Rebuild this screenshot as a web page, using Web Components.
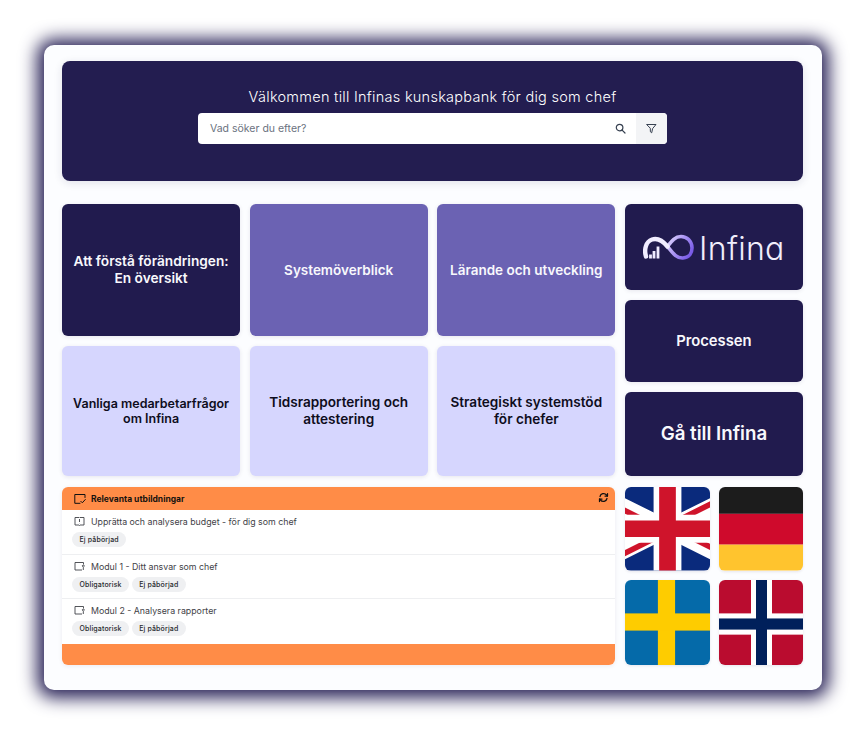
<!DOCTYPE html>
<html lang="sv">
<head>
<meta charset="utf-8">
<title>Infina</title>
<style>
  html, body { margin: 0; background: #fff; }
  body {
    box-sizing: border-box;
    min-height: 735px;
    padding: 45px 0 45px 44px;
    font-family: Inter, "Noto Sans", sans-serif;
  }
</style>
</head>
<body>
<app-panel>
  <hero-search slot="hero" heading="Välkommen till Infinas kunskapbank för dig som chef" placeholder="Vad söker du efter?"></hero-search>

  <link-tile tone="dark" size="13.7">Att förstå förändringen:<br>En översikt</link-tile>
  <link-tile tone="mid" size="13.5">Systemöverblick</link-tile>
  <link-tile tone="mid" size="13.5">Lärande och utveckling</link-tile>
  <side-stack>
    <link-tile tone="dark" style="height:86px"><infina-logo></infina-logo></link-tile>
    <link-tile tone="dark" size="14.8" style="height:82px">Processen</link-tile>
    <link-tile tone="dark" size="18.7" style="height:84px">Gå till Infina</link-tile>
  </side-stack>
  <link-tile tone="light" size="12.5">Vanliga medarbetarfrågor<br>om Infina</link-tile>
  <link-tile tone="light" size="13.6">Tidsrapportering och<br>attestering</link-tile>
  <link-tile tone="light" size="13.6">Strategiskt systemstöd<br>för chefer</link-tile>

  <edu-list heading="Relevanta utbildningar">
    <edu-item icon="book" name="Upprätta och analysera budget - för dig som chef">
      <status-chip>Ej påbörjad</status-chip>
    </edu-item>
    <edu-item icon="module" name="Modul 1 - Ditt ansvar som chef">
      <status-chip>Obligatorisk</status-chip>
      <status-chip>Ej påbörjad</status-chip>
    </edu-item>
    <edu-item icon="module" name="Modul 2 - Analysera rapporter">
      <status-chip>Obligatorisk</status-chip>
      <status-chip>Ej påbörjad</status-chip>
    </edu-item>
  </edu-list>

  <flag-grid>
    <flag-tile country="gb"></flag-tile>
    <flag-tile country="de"></flag-tile>
    <flag-tile country="se"></flag-tile>
    <flag-tile country="no"></flag-tile>
  </flag-grid>
</app-panel>

<script>
class AppPanel extends HTMLElement {
    constructor() {
        super();
        this.attachShadow({ mode: 'open' });
        this.shadowRoot.innerHTML = `
        <style>
            :host {
                display: block;
                box-sizing: border-box;
                width: 778px;
                height: 645px;
                padding: 16px 19px 0 18px;
                background: #fcfdff;
                border-radius: 10px;
                box-shadow: 0 1px 17px 7px #2a2458;
            }
            .grid {
                display: grid;
                grid-template-columns: repeat(4, 1fr);
                grid-template-rows: 132px 130px 179px;
                column-gap: 9.4px;
                row-gap: 10px;
                margin-top: 23px;
            }
        </style>
        <slot name="hero"></slot>
        <div class="grid"><slot></slot></div>
        `;
    }
}

class HeroSearch extends HTMLElement {
    constructor() {
        super();
        this.attachShadow({ mode: 'open' });
    }

    connectedCallback() {
        this.shadowRoot.innerHTML = `
        <style>
            :host {
                display: flex;
                flex-direction: column;
                align-items: center;
                box-sizing: border-box;
                height: 120px;
                padding-top: 26px;
                background: #231d50;
                border-radius: 8px;
                box-shadow: 0 2px 8px rgba(35,29,80,0.12);
            }
            h1 {
                margin: 0 0 7px;
                color: #fff;
                font: 300 14.5px/19px Inter, sans-serif;
                letter-spacing: 0.27px;
            }
            .search {
                display: flex;
                width: 469px;
                height: 31px;
                background: #fff;
                border-radius: 4px;
                overflow: hidden;
            }
            .field {
                flex: 1;
                display: flex;
                align-items: center;
                padding: 0 10px 0 12px;
                color: #6b7280;
                font: 400 10.5px Inter, sans-serif;
            }
            .field span { flex: 1; }
            .filter {
                width: 31px;
                display: flex;
                align-items: center;
                justify-content: center;
                background: #f3f4f6;
            }
            svg { display: block; fill: none; stroke: #374151; stroke-linecap: round; stroke-linejoin: round; }
        </style>
        <h1>${this.getAttribute('heading')}</h1>
        <div class="search">
            <div class="field">
                <span>${this.getAttribute('placeholder')}</span>
                <svg width="11" height="11" viewBox="0 0 11 11" stroke-width="1.2"><circle cx="4.6" cy="4.6" r="3.3"/><path d="M7.1 7.1l2.9 2.9"/></svg>
            </div>
            <div class="filter">
                <svg width="11" height="11" viewBox="0 0 11 11" stroke-width="1"><path d="M1 1.5h9L6.6 5.6l-.9 4.2-1.3-1-.1-3.2z"/></svg>
            </div>
        </div>
        `;
    }
}

class LinkTile extends HTMLElement {
    constructor() {
        super();
        this.attachShadow({ mode: 'open' });
    }

    connectedCallback() {
        const size = this.getAttribute('size') || 14;
        this.shadowRoot.innerHTML = `
        <style>
            :host {
                display: flex;
                align-items: center;
                justify-content: center;
                box-sizing: border-box;
                padding: 0 8px;
                border-radius: 6px;
                text-align: center;
                font: 600 ${size}px/1.24 Inter, sans-serif;
                box-shadow: 0 1px 4px rgba(35,29,80,0.10);
            }
            :host([tone="dark"]) { background: #211b4e; color: #f8f8fc; }
            :host([tone="mid"]) { background: #6b62b3; color: #f8f8fc; }
            :host([tone="light"]) { background: #d6d6fe; color: #0e0d1c; }
        </style>
        <slot></slot>
        `;
    }
}

class SideStack extends HTMLElement {
    constructor() {
        super();
        this.attachShadow({ mode: 'open' });
        this.shadowRoot.innerHTML = `
        <style>
            :host {
                display: flex;
                flex-direction: column;
                gap: 10px;
                grid-column: 4;
                grid-row: 1 / span 2;
            }
        </style>
        <slot></slot>
        `;
    }
}

class InfinaLogo extends HTMLElement {
    constructor() {
        super();
        this.attachShadow({ mode: 'open' });
        this.shadowRoot.innerHTML = `
        <style>
            :host { display: flex; align-items: center; gap: 5px; }
            span {
                margin-top: 4px;
                color: #f0eefc;
                font: 300 32px/1 Inter, sans-serif;
                font-feature-settings: "cv11";
                letter-spacing: 0.3px;
            }
            svg { display: block; }
        </style>
        <svg width="51" height="27" viewBox="0 0 51 27" fill="none">
            <defs>
                <linearGradient id="loop" x1="18" y1="6" x2="46" y2="24" gradientUnits="userSpaceOnUse">
                    <stop offset="0" stop-color="#f4f1ff"/>
                    <stop offset="0.45" stop-color="#b6a3f6"/>
                    <stop offset="1" stop-color="#7758e6"/>
                </linearGradient>
            </defs>
            <path d="M24.500 12.500C29 18 33 24.500 40 24C46.500 23.500 49.200 18.500 49 13.500C48.700 7 44 2.500 38 2.500C31.500 2.500 28 8 24.500 12.500" stroke="url(#loop)" stroke-width="3.600" stroke-linecap="round"/>
            <path d="M3 22.500C.8 15.500 3 7.500 9 5.500C15 3.500 20 7 24.500 12.500" stroke="#f1edff" stroke-width="4.400" stroke-linecap="round"/>
            <path d="M7.500 24.500v-4M11 24.500v-7.500M15 24.500V12.500" stroke="#f0ecff" stroke-width="2.800"/>
        </svg>
        <span>Infina</span>
        `;
    }
}

class EduList extends HTMLElement {
    constructor() {
        super();
        this.attachShadow({ mode: 'open' });
    }

    connectedCallback() {
        this.shadowRoot.innerHTML = `
        <style>
            :host {
                display: flex;
                flex-direction: column;
                grid-column: 1 / span 3;
                margin-top: 1px;
                border-radius: 6px;
                overflow: hidden;
                background: #fff;
                box-shadow: 0 1px 4px rgba(35,29,80,0.08);
            }
            header {
                display: flex;
                align-items: center;
                gap: 5px;
                height: 23px;
                flex: none;
                padding: 0 6px 0 12px;
                background: #ff8c47;
                color: #17130f;
                font: 700 8.5px Inter, sans-serif;
            }
            header span { flex: 1; }
            .refresh { margin-top: -2px; }
            .rows { flex: 1; }
            footer { flex: none; height: 22px; background: #ff8c47; }
            svg { display: block; fill: none; stroke: #111; stroke-linecap: round; stroke-linejoin: round; }
        </style>
        <header>
            <svg width="12" height="12" viewBox="0 0 12 12" stroke-width="1"><path d="M11 4.500V1.500H.8V10.300H6"/><path d="M6.800 8.300l1.500 1.500 3-3.300"/></svg>
            <span>${this.getAttribute('heading')}</span>
            <svg class="refresh" width="11" height="11" viewBox="0 0 11 11" stroke-width="1.250"><path d="M2 4.500A3.700 3.700 0 0 1 8.500 3L9.500 4"/><path d="M9.500 1.500V4H7"/><path d="M9 6.500A3.700 3.700 0 0 1 2.500 8L1.500 7"/><path d="M1.500 9.500V7H4"/></svg>
        </header>
        <div class="rows"><slot></slot></div>
        <footer></footer>
        `;
    }
}

const EDU_ICONS = {
    book: '<path d="M1 1.500H5L5.500 2 6 1.500H10V9H6L5.500 9.500 5 9H1z"/><path d="M5.500 3v3M5.500 7.300v.2"/>',
    module: '<path d="M9.500 3.500V1.500H1V9H8"/><path d="M9.300 4.200a.9.9 0 1 1-.01 0M9.300 9V6.500"/>'
};

class EduItem extends HTMLElement {
    constructor() {
        super();
        this.attachShadow({ mode: 'open' });
    }

    connectedCallback() {
        const icon = EDU_ICONS[this.getAttribute('icon')];
        this.shadowRoot.innerHTML = `
        <style>
            :host {
                display: block;
                box-sizing: border-box;
                height: 44.500px;
                padding: 5.500px 0 0 10px;
                border-bottom: 1px solid #eeeff1;
            }
            :host(:last-child) { border-bottom: 0; }
            .name {
                display: flex;
                align-items: center;
                gap: 6px;
                height: 12px;
                padding-left: 2px;
                color: #3f4247;
                font: 400 8.8px Inter, sans-serif;
            }
            .chips { display: flex; gap: 2.500px; margin-top: 4.500px; }
            svg { display: block; fill: none; stroke: #3f4247; stroke-width: 0.9; stroke-linejoin: round; }
        </style>
        <div class="name">
            <svg width="11" height="11" viewBox="0 0 11 11">${icon}</svg>
            <span>${this.getAttribute('name')}</span>
        </div>
        <div class="chips"><slot></slot></div>
        `;
    }
}

class StatusChip extends HTMLElement {
    constructor() {
        super();
        this.attachShadow({ mode: 'open' });
        this.shadowRoot.innerHTML = `
        <style>
            :host {
                display: inline-flex;
                align-items: center;
                height: 15px;
                padding: 0 7.500px;
                border-radius: 8px;
                background: #eff0f2;
                color: #26282c;
                font: 500 7px Inter, sans-serif;
                letter-spacing: 0.15px;
            }
        </style>
        <slot></slot>
        `;
    }
}

class FlagGrid extends HTMLElement {
    constructor() {
        super();
        this.attachShadow({ mode: 'open' });
        this.shadowRoot.innerHTML = `
        <style>
            :host {
                display: grid;
                grid-template-columns: 85px 84px;
                grid-template-rows: 83.500px 85px;
                gap: 9.500px 9px;
                margin-top: 1px;
            }
        </style>
        <slot></slot>
        `;
    }
}

const FLAGS = {
    gb: `<svg viewBox="0 0 60 30" preserveAspectRatio="xMidYMid slice">
            <clipPath id="tri"><path d="M30 15h30v15zv15H0zH0V0zV0h30z"/></clipPath>
            <path d="M0 0v30h60V0z" fill="#0a2a7c"/>
            <path d="M0 0l60 30M60 0L0 30" stroke="#fff" stroke-width="6"/>
            <path d="M0 0l60 30M60 0L0 30" clip-path="url(#tri)" stroke="#cf142b" stroke-width="4"/>
            <path d="M30 0v30M0 15h60" stroke="#fff" stroke-width="10"/>
            <path d="M30 0v30M0 15h60" stroke="#cf142b" stroke-width="6"/>
        </svg>`,
    de: `<svg viewBox="0 0 84 84" preserveAspectRatio="none">
            <rect width="84" height="27" fill="#1c1c1c"/>
            <rect y="27" width="84" height="31" fill="#cf0a2c"/>
            <rect y="58" width="84" height="26" fill="#ffc42e"/>
        </svg>`,
    se: `<svg viewBox="0 0 84 84" preserveAspectRatio="none">
            <rect width="84" height="84" fill="#056aa9"/>
            <rect x="32.500" width="17" height="84" fill="#fecc00"/>
            <rect y="33" width="84" height="17" fill="#fecc00"/>
        </svg>`,
    no: `<svg viewBox="0 0 84 84" preserveAspectRatio="none">
            <rect width="84" height="84" fill="#ba0c2f"/>
            <rect x="32" width="21" height="84" fill="#fff"/>
            <rect y="33" width="84" height="21" fill="#fff"/>
            <rect x="37" width="11" height="84" fill="#00205b"/>
            <rect y="38" width="84" height="11" fill="#00205b"/>
        </svg>`
};

class FlagTile extends HTMLElement {
    constructor() {
        super();
        this.attachShadow({ mode: 'open' });
    }

    connectedCallback() {
        this.shadowRoot.innerHTML = `
        <style>
            :host {
                display: block;
                border-radius: 6px;
                overflow: hidden;
                box-shadow: 0 1px 3px rgba(35,29,80,0.10);
            }
            svg { display: block; width: 100%; height: 100%; }
        </style>
        ${FLAGS[this.getAttribute('country')]}
        `;
    }
}

customElements.define('app-panel', AppPanel);
customElements.define('hero-search', HeroSearch);
customElements.define('link-tile', LinkTile);
customElements.define('side-stack', SideStack);
customElements.define('infina-logo', InfinaLogo);
customElements.define('edu-list', EduList);
customElements.define('edu-item', EduItem);
customElements.define('status-chip', StatusChip);
customElements.define('flag-grid', FlagGrid);
customElements.define('flag-tile', FlagTile);
</script>
</body>
</html>
